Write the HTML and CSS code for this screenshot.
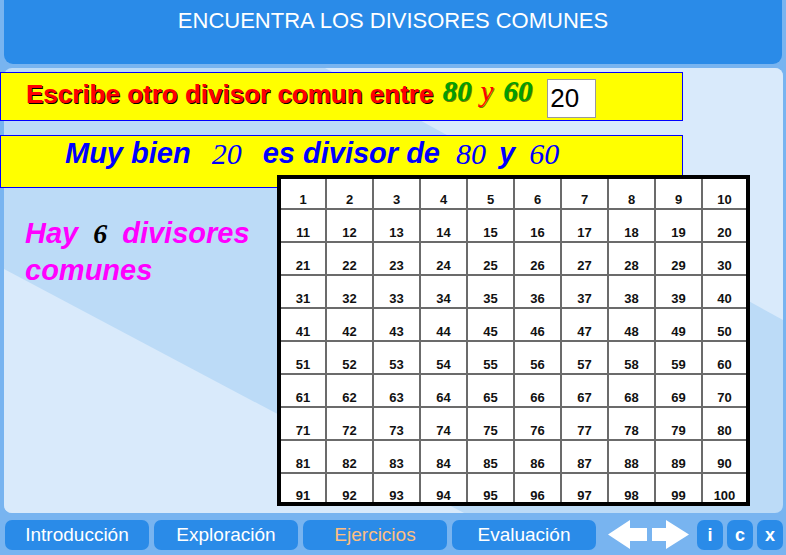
FILE: index.html
```html
<!DOCTYPE html>
<html lang="es">
<head>
<meta charset="utf-8">
<title>Encuentra los divisores comunes</title>
<link rel="stylesheet" href="styles.css">
</head>
<body>
<div class="header"><h1 class="title">ENCUENTRA LOS DIVISORES COMUNES</h1></div>
<div class="panel">
  <div class="box box-q">
    <span class="q">Escribe otro divisor comun entre</span>
    <span class="qn green n80">80</span>
    <span class="qn red ny">y</span>
    <span class="qn green n60">60</span>
    <input class="answer" type="text" value="20">
  </div>
  <div class="box box-a">
    <span class="a">Muy bien</span>
    <span class="an a20">20</span>
    <span class="a a-es">es divisor de</span>
    <span class="an a80">80</span>
    <span class="a a-y">y</span>
    <span class="an a60">60</span>
  </div>
  <div class="row">
    <div class="result"><span class="hay">Hay</span><span class="six">6</span><span class="divs">divisores</span><br>comunes</div>
    <div class="grid">
      <div class="c">1</div><div class="c">2</div><div class="c">3</div><div class="c">4</div><div class="c">5</div><div class="c">6</div><div class="c">7</div><div class="c">8</div><div class="c">9</div><div class="c">10</div>
      <div class="c">11</div><div class="c">12</div><div class="c">13</div><div class="c">14</div><div class="c">15</div><div class="c">16</div><div class="c">17</div><div class="c">18</div><div class="c">19</div><div class="c">20</div>
      <div class="c">21</div><div class="c">22</div><div class="c">23</div><div class="c">24</div><div class="c">25</div><div class="c">26</div><div class="c">27</div><div class="c">28</div><div class="c">29</div><div class="c">30</div>
      <div class="c">31</div><div class="c">32</div><div class="c">33</div><div class="c">34</div><div class="c">35</div><div class="c">36</div><div class="c">37</div><div class="c">38</div><div class="c">39</div><div class="c">40</div>
      <div class="c">41</div><div class="c">42</div><div class="c">43</div><div class="c">44</div><div class="c">45</div><div class="c">46</div><div class="c">47</div><div class="c">48</div><div class="c">49</div><div class="c">50</div>
      <div class="c">51</div><div class="c">52</div><div class="c">53</div><div class="c">54</div><div class="c">55</div><div class="c">56</div><div class="c">57</div><div class="c">58</div><div class="c">59</div><div class="c">60</div>
      <div class="c">61</div><div class="c">62</div><div class="c">63</div><div class="c">64</div><div class="c">65</div><div class="c">66</div><div class="c">67</div><div class="c">68</div><div class="c">69</div><div class="c">70</div>
      <div class="c">71</div><div class="c">72</div><div class="c">73</div><div class="c">74</div><div class="c">75</div><div class="c">76</div><div class="c">77</div><div class="c">78</div><div class="c">79</div><div class="c">80</div>
      <div class="c">81</div><div class="c">82</div><div class="c">83</div><div class="c">84</div><div class="c">85</div><div class="c">86</div><div class="c">87</div><div class="c">88</div><div class="c">89</div><div class="c">90</div>
      <div class="c last">91</div><div class="c last">92</div><div class="c last">93</div><div class="c last">94</div><div class="c last">95</div><div class="c last">96</div><div class="c last">97</div><div class="c last">98</div><div class="c last">99</div><div class="c last">100</div>
    </div>
  </div>
</div>
<div class="nav">
  <div class="btn">Introducción</div>
  <div class="btn">Exploración</div>
  <div class="btn btn-active">Ejercicios</div>
  <div class="btn">Evaluación</div>
  <svg class="arrows" width="82" height="30" viewBox="0 0 82 30">
    <polygon points="0,14.5 22,0 22,8 39,8 39,21 22,21 22,29" fill="#fff"/>
    <polygon points="44,8 58,8 58,0 81,14.5 58,29 58,21 44,21" fill="#fff"/>
  </svg>
  <div class="sq sq-first">i</div>
  <div class="sq">c</div>
  <div class="sq">x</div>
</div>
</body>
</html>
```

FILE: styles.css
```css
body {
  margin: 0;
  width: 786px;
  height: 555px;
  overflow: hidden;
  background: #78b4f0;
  font-family: "Liberation Sans", Arial, sans-serif;
}

.header {
  margin: 0 4px 0 4px;
  height: 64px;
  background: #2a8be8;
  border-radius: 0 0 9px 9px;
}

.title {
  margin: 0;
  padding-top: 8px;
  font-size: 22px;
  line-height: 25px;
  font-weight: normal;
  color: #fff;
  text-align: center;
}

.panel {
  box-sizing: border-box;
  margin: 4px 3px 0 4px;
  padding-top: 4px;
  height: 445px;
  background: #bcdbf7;
  border-radius: 8px;
  position: relative;
  z-index: 0;
}

.panel::before,
.panel::after {
  content: "";
  position: absolute;
  inset: 0;
  background: #d9eafb;
  border-radius: inherit;
  z-index: -1;
}

.panel::before {
  clip-path: polygon(321px 0, 100% 0, 100% 252px);
}

.panel::after {
  clip-path: polygon(0 201px, 460px 100%, 0 100%);
}

.box {
  box-sizing: border-box;
  margin-left: -4px;
  width: 683px;
  background: #ffff00;
  border: 1px solid #0000ff;
  display: flex;
  align-items: flex-start;
}

.box-q {
  height: 49px;
  padding-left: 25px;
}

.q {
  margin-top: 6px;
  font-size: 26px;
  line-height: 30px;
  font-weight: bold;
  color: #ff0000;
  text-shadow: 1px 1px 0 #000;
}

.qn {
  margin-top: 2px;
  font-family: "Liberation Serif", "Times New Roman", serif;
  font-style: italic;
  font-weight: bold;
  font-size: 29px;
  line-height: 32px;
  text-shadow: 1px 1px 0 rgba(0, 0, 0, 0.55);
}

.green { color: #00a000; }
.red { color: #ff0000; }

.n80 { margin-left: 9px; }
.ny { margin-left: 9px; font-weight: normal; }
.n60 { margin-left: 10px; }

.answer {
  box-sizing: border-box;
  margin: 6px 0 0 15px;
  width: 49px;
  height: 39px;
  border: 1px solid #9a9a9a;
  padding: 0 0 0 2px;
  background: #fff;
  font-family: "Liberation Sans", Arial, sans-serif;
  font-size: 26px;
  color: #000;
  outline: none;
}

.box-a {
  margin-top: 14px;
  height: 53px;
  padding-left: 64px;
  padding-top: 1px;
}

.a {
  font-size: 29px;
  line-height: 33px;
  font-weight: bold;
  font-style: italic;
  color: #0000ff;
}

.an {
  font-family: "Liberation Serif", "Times New Roman", serif;
  font-size: 30px;
  line-height: 33px;
  font-style: italic;
  color: #0000ff;
}

.a20 { margin-left: 21px; }
.a-es { margin-left: 21px; }
.a80 { margin-left: 16px; }
.a-y { margin-left: 13px; }
.a60 { margin-left: 14px; }

.row {
  display: flex;
  align-items: flex-start;
  margin-top: -13px;
}

.result {
  box-sizing: border-box;
  width: 273px;
  padding: 40px 0 0 21px;
  font-size: 29px;
  line-height: 36px;
  font-weight: bold;
  font-style: italic;
  color: #ff00ff;
}

.six {
  margin: 0 15px 0 15px;
  font-family: "Liberation Serif", "Times New Roman", serif;
  font-size: 28px;
  font-weight: bold;
  color: #000;
}

.grid {
  position: relative;
  display: grid;
  grid-template-columns: 44px repeat(8, 45px) 43px;
  grid-template-rows: 29px repeat(8, 31px) 28px;
  gap: 2px;
  background: #6b6b6b;
  border: 4px solid #000;
}

.c {
  background: #fff;
  display: flex;
  align-items: flex-end;
  justify-content: center;
  padding-bottom: 2px;
  font-size: 13px;
  line-height: 13px;
  font-weight: bold;
  color: #111;
}

.c.last {
  padding-bottom: 0;
}

.nav {
  display: flex;
  align-items: center;
  margin-top: 7px;
  height: 30px;
}

.btn {
  margin-left: 5px;
  width: 144px;
  height: 30px;
  background: #2a8be8;
  border-radius: 7px;
  color: #fff;
  font-size: 19px;
  display: flex;
  align-items: center;
  justify-content: center;
}

.btn-active {
  color: #ffbf80;
}

.arrows {
  margin-left: 12px;
  display: block;
}

.sq {
  margin-left: 4px;
  width: 26px;
  height: 30px;
  background: #2a8be8;
  border-radius: 7px;
  color: #fff;
  font-size: 18px;
  font-weight: bold;
  display: flex;
  align-items: center;
  justify-content: center;
}

.sq-first {
  margin-left: 7px;
}
```
